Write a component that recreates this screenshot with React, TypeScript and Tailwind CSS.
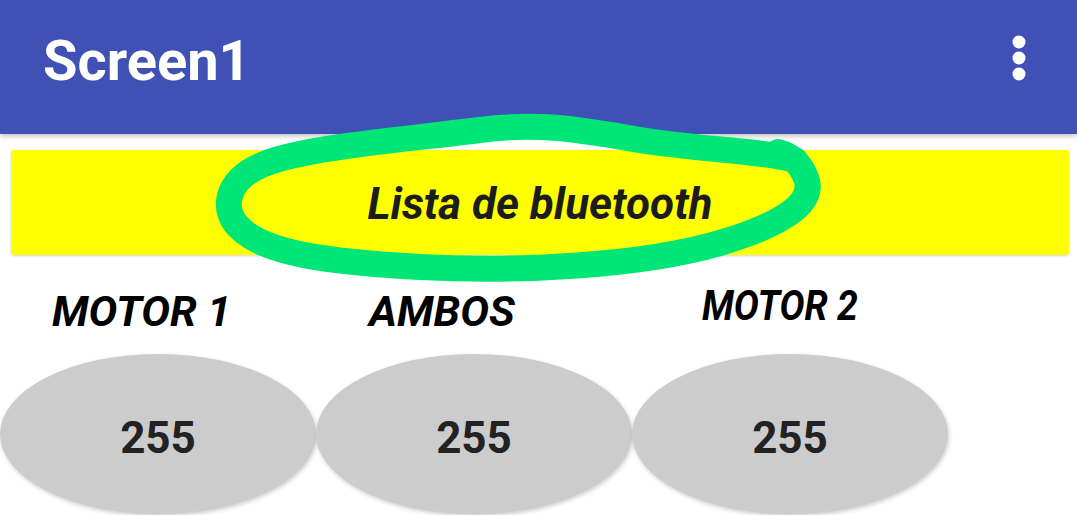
import React from "react";

const font = { fontFamily: "Roboto, 'Noto Sans', 'Liberation Sans', sans-serif" };

export default function App() {
  return (
    <div className="relative w-[1077px] h-[515px] overflow-hidden bg-white" style={font}>
      <div className="relative z-10 h-[134px] bg-[#3F51B5] flex items-center justify-between pl-[43px] pr-[50px] shadow-[0_2px_5px_rgba(0,0,0,0.25)]">
        <div className="text-white text-[56px] leading-none font-bold -mt-[12px]">Screen1</div>
        <svg width="16" height="48" viewBox="0 0 16 48" className="-mt-[18px]">
          <circle cx="8" cy="8" r="6.5" fill="white" />
          <circle cx="8" cy="24" r="6.5" fill="white" />
          <circle cx="8" cy="40" r="6.5" fill="white" />
        </svg>
      </div>

      <div className="ml-[11px] mr-[8px] mt-[16px] h-[105px] rounded-[3px] bg-[#FFFF00] shadow-[0_1px_3px_rgba(0,0,0,0.18)] flex items-center justify-center">
        <span className="text-[44px] leading-none font-bold italic text-[#1c1c1c] mt-[2px]">Lista de bluetooth</span>
      </div>

      <div className="mt-[35px] flex items-start h-[43px]">
        <div className="w-[369px] pl-[52px] text-[43px] leading-none font-bold italic text-black">MOTOR 1</div>
        <div className="w-[333px] text-[43px] leading-none font-bold italic text-black">AMBOS</div>
        <div className="-mt-[6px] text-[43px] leading-none font-bold italic text-black scale-x-[0.87] origin-left whitespace-nowrap">MOTOR 2</div>
      </div>

      <div className="mt-[21px] flex">
        {[0, 1, 2].map((i) => (
          <div
            key={i}
            className="w-[316px] h-[160px] shrink-0 rounded-[50%] bg-[#CCCCCC] shadow-[1px_2px_4px_rgba(0,0,0,0.2)] flex items-center justify-center"
          >
            <span className="text-[44px] leading-none font-bold text-[#222222] mt-[8px]">255</span>
          </div>
        ))}
      </div>

      <svg
        className="absolute left-0 top-0 z-20 pointer-events-none"
        width="1077"
        height="515"
        viewBox="0 0 1077 515"
      >
        <path
          d="M 795 160 C 760 150, 700 150, 640 140 C 580 130, 540 122, 480 130 C 400 140, 300 148, 262 165 C 225 180, 220 212, 242 230 C 268 254, 330 262, 420 267 C 520 272, 640 266, 720 243 C 790 222, 815 200, 806 178 C 800 163, 792 156, 778 152"
          fill="none"
          stroke="#00E676"
          strokeWidth="26"
          strokeLinecap="round"
          strokeLinejoin="round"
        />
      </svg>
    </div>
  );
}
